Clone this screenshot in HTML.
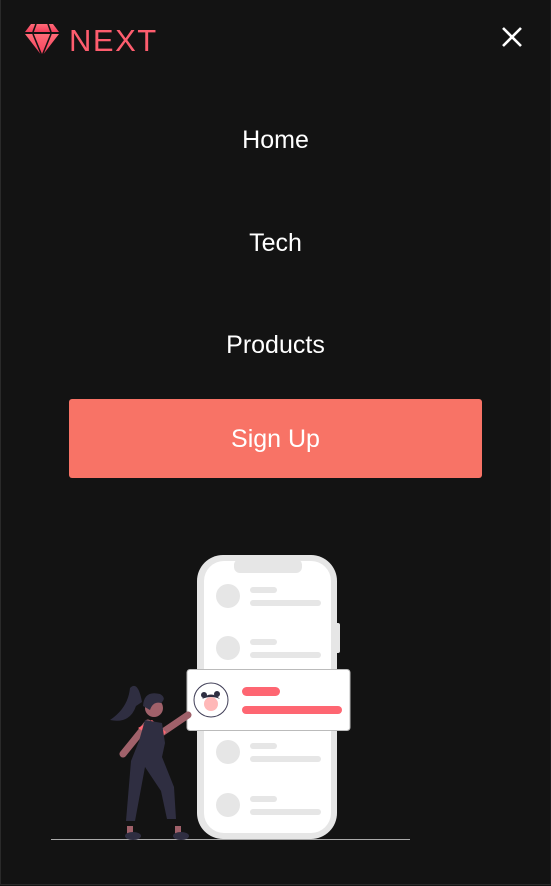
<!DOCTYPE html>
<html><head><meta charset="utf-8"><style>
html,body{margin:0;padding:0}
body{width:551px;height:886px;background:#131313;position:relative;overflow:hidden;font-family:"Liberation Sans",sans-serif}
.frame{position:absolute;left:0;top:0;width:549px;height:884px;border:1px solid #2a2a2a;border-top:none;border-right-color:#1c1c1c}
.logo{position:absolute;left:69px;top:23px;font-size:31px;color:#fe5d6e;letter-spacing:1.5px;line-height:36px}
.nav{position:absolute;left:0;width:551px;text-align:center;color:#fff;font-size:25px;line-height:30px}
.btn{position:absolute;left:69px;top:399px;width:413px;height:79px;background:#f87366;border-radius:3px;color:#fff;font-size:25px;text-align:center;line-height:81px}
</style></head><body>
<div class="frame"></div>
<svg style="position:absolute;left:0;top:0" width="70" height="60">
<defs><linearGradient id="g" x1="0" y1="0" x2="0" y2="1"><stop offset="0" stop-color="#ff6b78"/><stop offset="1" stop-color="#f43e5b"/></linearGradient></defs>
<polygon points="31,24 53,24 59,32 25,32" fill="url(#g)"/>
<polygon points="25,34 59,34 42,56" fill="url(#g)"/>
<g stroke="#131313" stroke-width="1.6" fill="none">
<line x1="36" y1="24" x2="33" y2="32"/><line x1="48" y1="24" x2="51" y2="32"/>
<line x1="33" y1="34" x2="42" y2="56"/><line x1="51" y1="34" x2="42" y2="56"/>
</g></svg>
<div class="logo">NEXT</div>
<svg style="position:absolute;left:501px;top:26px" width="22" height="22"><g stroke="#fff" stroke-width="2.6"><line x1="2" y1="2" x2="20" y2="20"/><line x1="20" y1="2" x2="2" y2="20"/></g></svg>
<div class="nav" style="top:125px">Home</div>
<div class="nav" style="top:228px">Tech</div>
<div class="nav" style="top:330px">Products</div>
<div class="btn">Sign Up</div>
<svg style="position:absolute;left:0;top:540px" width="551" height="346">
<line x1="51" y1="299.5" x2="410" y2="299.5" stroke="#aaa" stroke-width="1"/>
<rect x="335" y="83" width="5" height="30" rx="2" fill="#e6e6e6"/>
<rect x="197" y="15" width="140" height="284" rx="26" fill="#e6e6e6"/>
<rect x="204" y="21" width="127" height="272" rx="20" fill="#fff"/>
<rect x="234" y="19" width="68" height="14" rx="6" fill="#e6e6e6"/>
<g fill="#e6e6e6">
<circle cx="228" cy="56" r="12"/><rect x="250" y="47" width="27" height="6" rx="3"/><rect x="250" y="60" width="71" height="6" rx="3"/>
<circle cx="228" cy="108" r="12"/><rect x="250" y="99" width="27" height="6" rx="3"/><rect x="250" y="112" width="71" height="6" rx="3"/>
<circle cx="228" cy="212" r="12"/><rect x="250" y="203" width="27" height="6" rx="3"/><rect x="250" y="216" width="71" height="6" rx="3"/>
<circle cx="228" cy="265" r="12"/><rect x="250" y="256" width="27" height="6" rx="3"/><rect x="250" y="269" width="71" height="6" rx="3"/>
</g>
<rect x="187" y="129.5" width="163" height="61" rx="3" fill="#fff" stroke="#bbb" stroke-width="1"/>
<circle cx="211" cy="160" r="17" fill="#fff" stroke="#3f3d56" stroke-width="1"/>
<circle cx="211" cy="164" r="7" fill="#ffb8b8"/>
<path d="M202,159 q9,-9 18,0 q-9,-4 -18,0z" fill="#2f2e41"/>
<circle cx="204" cy="155" r="3" fill="#2f2e41"/><circle cx="217" cy="154" r="3" fill="#2f2e41"/>
<rect x="242" y="147" width="38" height="9" rx="4.5" fill="#fe6672"/>
<rect x="242" y="166" width="100" height="8" rx="4" fill="#fe6672"/>
<!-- woman -->
<path d="M142,162 q-4,-22 -12,-14 q-2,20 -20,32 q20,4 26,-14z" fill="#2f2e41"/>
<path d="M148,183 l-25,31" stroke="#a0616a" stroke-width="7" stroke-linecap="round"/>
<path d="M160,194 l28,-19" stroke="#a0616a" stroke-width="7" stroke-linecap="round"/>
<path d="M138,188 l14,-8 l14,12 l-7,9z" fill="#fe6672"/>
<path d="M145,180 l17,3 l3,20 l-3,14 l12,30 l2,32 l-9,0 l-6,-28 l-16,-24 l-10,54 l-9,0 l5,-60 l8,-20z" fill="#2f2e41"/>
<rect x="127" y="286" width="6" height="9" fill="#a0616a"/><rect x="175" y="286" width="6" height="9" fill="#a0616a"/>
<ellipse cx="133" cy="296" rx="8" ry="4" fill="#2f2e41"/><ellipse cx="181" cy="296" rx="8" ry="4" fill="#2f2e41"/>
<circle cx="154" cy="168" r="9" fill="#a0616a"/>
<path d="M143,166 q1,-16 17,-12 q7,4 1,9 q-8,-2 -11,7z" fill="#2f2e41"/>
</svg>
</body></html>
